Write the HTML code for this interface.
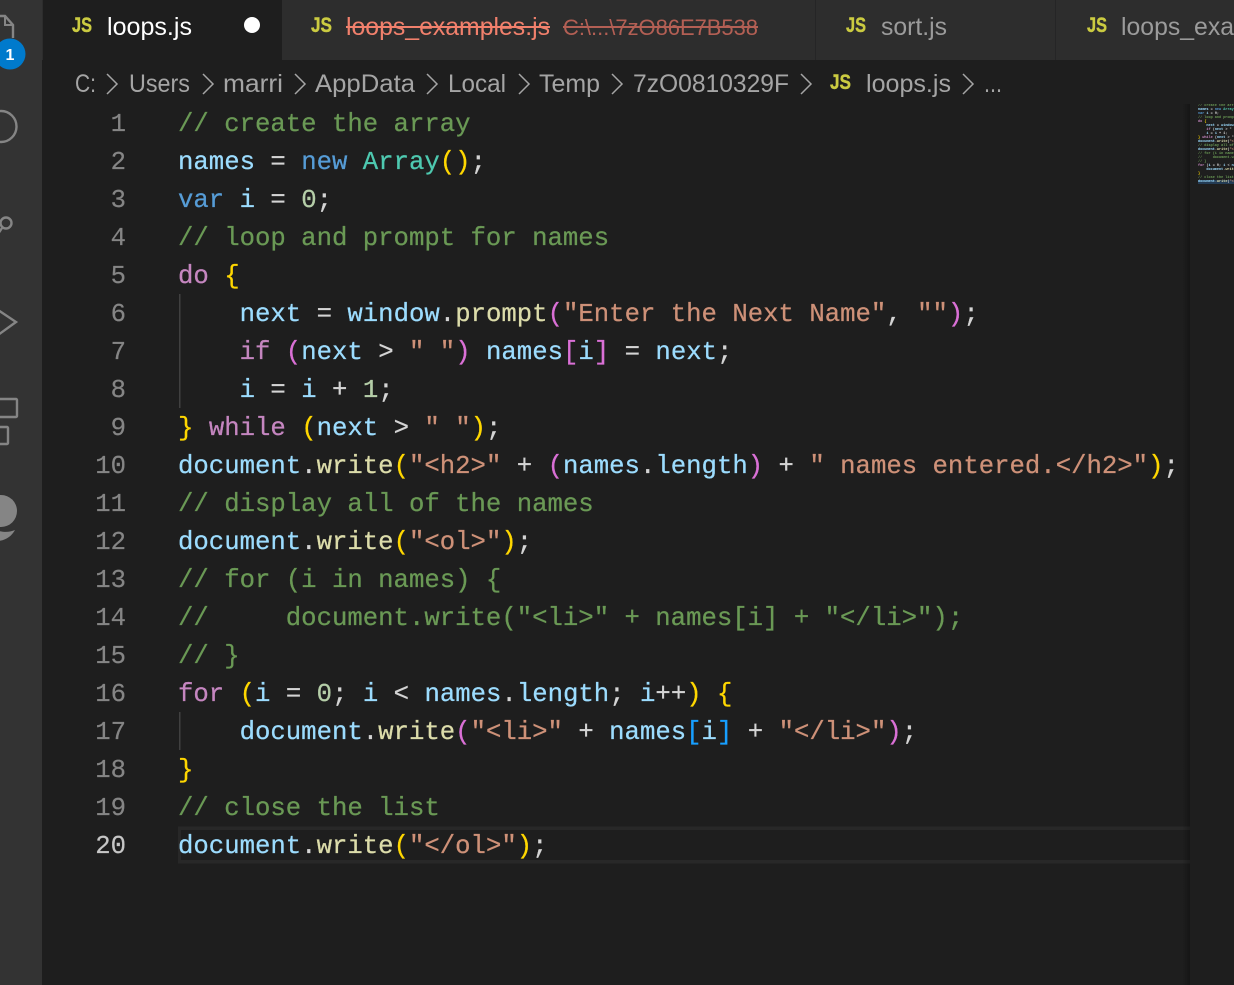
<!DOCTYPE html>
<html lang="en">
<head>
<meta charset="utf-8">
<title>loops.js</title>
<style>
html,body{margin:0;padding:0;background:#1e1e1e;}
#app{position:relative;width:1234px;height:985px;overflow:hidden;background:#1e1e1e;}
svg.chrome{position:absolute;left:0;top:0;}
.ln{position:absolute;left:60px;width:66px;height:38px;margin-top:2px;text-align:right;color:#858585;font:25.67px/38px "Liberation Mono",monospace;-webkit-text-stroke:.2px currentColor;}
.ln.a{color:#c6c6c6;}
.cl{position:absolute;left:178px;height:38px;margin-top:2px;white-space:pre;font:25.67px/38px "Liberation Mono",monospace;color:#d4d4d4;-webkit-text-stroke:.25px;}
.c{color:#6a9955}.v{color:#9cdcfe}.f{color:#dcdcaa}.s{color:#ce9178}.k{color:#c586c0}.b{color:#569cd6}.t{color:#4ec9b0}.n{color:#b5cea8}.y{color:#ffd700}.p{color:#da70d6}.l{color:#179fff}
#mm{position:absolute;left:1198px;top:104px;width:36px;height:84px;overflow:hidden;font:bold 3.5px/4px "Liberation Mono",monospace;white-space:pre;color:#d4d4d4;}
#mm div{height:4px;}
</style>
</head>
<body>
<div id="app">
<svg class="chrome" width="1234" height="985" viewBox="0 0 1234 985" font-family="'Liberation Sans',sans-serif">
  <defs>
    <linearGradient id="sh" x1="0" x2="1" y1="0" y2="0">
      <stop offset="0" stop-color="#000" stop-opacity="0"/>
      <stop offset="1" stop-color="#000" stop-opacity=".28"/>
    </linearGradient>
  </defs>
  <!-- activity bar -->
  <rect x="0" y="0" width="42" height="985" fill="#333333"/>
  <!-- tab bar -->
  <rect x="42" y="0" width="1192" height="60" fill="#2d2d2d"/>
  <rect x="43" y="0" width="239" height="60" fill="#1e1e1e"/>
  <rect x="815" y="0" width="1" height="60" fill="#252526"/>
  <rect x="1055" y="0" width="1" height="60" fill="#252526"/>

  <!-- activity icons -->
  <g fill="none" stroke="#858585" stroke-width="2.4">
    <path d="M-2 16H5L13 25V38"/>
    <path d="M5 16V25H13" stroke-width="2"/>
    <circle cx="1" cy="126.5" r="15.5"/>
    <circle cx="6" cy="223" r="5.5"/>
    <path d="M2 228L-2 234"/>
    <path d="M-2 310L16 322L-2 335"/>
    <rect x="-8" y="399" width="25" height="18" rx="1"/>
    <rect x="-8" y="427" width="16" height="17" rx="1"/>
  </g>
  <circle cx="1" cy="511" r="16" fill="#858585"/>
  <path d="M-4 530C4 533 10 532 15 530C11 537 5 541 -4 541Z" fill="#858585"/>
  <circle cx="10" cy="54" r="15.5" fill="#007acc"/>
  <text x="10" y="60" fill="#fff" font-size="16" font-weight="700" text-anchor="middle">1</text>

  <!-- tab JS icons -->
  <g fill="#cbcb41" font-size="21" font-weight="700" stroke="#cbcb41" stroke-width=".4">
    <text x="72" y="32" textLength="20" lengthAdjust="spacingAndGlyphs">JS</text>
    <text x="311" y="32" textLength="21" lengthAdjust="spacingAndGlyphs">JS</text>
    <text x="846" y="32" textLength="20" lengthAdjust="spacingAndGlyphs">JS</text>
    <text x="1087" y="32" textLength="20" lengthAdjust="spacingAndGlyphs">JS</text>
    <text x="830" y="89" textLength="21" lengthAdjust="spacingAndGlyphs">JS</text>
  </g>

  <!-- tab labels -->
  <g font-size="25">
    <text x="107" y="35" fill="#ffffff" textLength="85" lengthAdjust="spacingAndGlyphs">loops.js</text>
    <text x="346" y="35" fill="#f1806c" textLength="204" lengthAdjust="spacingAndGlyphs">loops_examples.js</text>
    <rect x="346" y="26" width="204" height="2" fill="#f1806c"/>
    <text x="563" y="35" fill="#b35f54" font-size="22" textLength="195" lengthAdjust="spacingAndGlyphs">C:\...\7zO86E7B538</text>
    <rect x="563" y="26" width="195" height="2" fill="#b35f54"/>
    <text x="881" y="35" fill="#9b9b9b" textLength="66" lengthAdjust="spacingAndGlyphs">sort.js</text>
    <text x="1121" y="35" fill="#9b9b9b" textLength="113" lengthAdjust="spacingAndGlyphs">loops_exa</text>
  </g>
  <circle cx="252" cy="25" r="8" fill="#ffffff"/>

  <!-- breadcrumbs -->
  <g font-size="25" fill="#a5a5a5">
    <text x="75" y="92" textLength="21" lengthAdjust="spacingAndGlyphs">C:</text>
    <text x="129" y="92" textLength="61" lengthAdjust="spacingAndGlyphs">Users</text>
    <text x="223" y="92" textLength="60" lengthAdjust="spacingAndGlyphs">marri</text>
    <text x="315" y="92" textLength="100" lengthAdjust="spacingAndGlyphs">AppData</text>
    <text x="448" y="92" textLength="58" lengthAdjust="spacingAndGlyphs">Local</text>
    <text x="539" y="92" textLength="61" lengthAdjust="spacingAndGlyphs">Temp</text>
    <text x="633" y="92" textLength="156" lengthAdjust="spacingAndGlyphs">7zO0810329F</text>
    <text x="866" y="92" textLength="85" lengthAdjust="spacingAndGlyphs">loops.js</text>
    <text x="984" y="92" textLength="18" lengthAdjust="spacingAndGlyphs">...</text>
  </g>
  <g fill="none" stroke="#a5a5a5" stroke-width="1.5">
    <path d="M107 74L117 84L107 94"/>
    <path d="M203 74L213 84L203 94"/>
    <path d="M295 74L305 84L295 94"/>
    <path d="M427 74L437 84L427 94"/>
    <path d="M519 74L529 84L519 94"/>
    <path d="M612 74L622 84L612 94"/>
    <path d="M801 74L811 84L801 94"/>
    <path d="M963 74L973 84L963 94"/>
  </g>

  <!-- current line highlight -->
  <rect x="178" y="826.5" width="1012" height="3.5" fill="#282828"/>
  <rect x="178" y="860" width="1012" height="3.5" fill="#282828"/>
  <rect x="178" y="826.5" width="3" height="37" fill="#282828"/>

  <!-- indent guides -->
  <rect x="179" y="294" width="1.5" height="114" fill="#404040"/>
  <rect x="179" y="712" width="1.5" height="38" fill="#404040"/>

  <!-- minimap shadow -->
  <rect x="1182" y="104" width="8" height="881" fill="url(#sh)"/>
  <!-- minimap current-line highlight -->
  <rect x="1198" y="180" width="36" height="4" fill="#264f78" opacity=".6"/>
</svg>

<div class="ln" style="top:104px">1</div>
<div class="ln" style="top:142px">2</div>
<div class="ln" style="top:180px">3</div>
<div class="ln" style="top:218px">4</div>
<div class="ln" style="top:256px">5</div>
<div class="ln" style="top:294px">6</div>
<div class="ln" style="top:332px">7</div>
<div class="ln" style="top:370px">8</div>
<div class="ln" style="top:408px">9</div>
<div class="ln" style="top:446px">10</div>
<div class="ln" style="top:484px">11</div>
<div class="ln" style="top:522px">12</div>
<div class="ln" style="top:560px">13</div>
<div class="ln" style="top:598px">14</div>
<div class="ln" style="top:636px">15</div>
<div class="ln" style="top:674px">16</div>
<div class="ln" style="top:712px">17</div>
<div class="ln" style="top:750px">18</div>
<div class="ln" style="top:788px">19</div>
<div class="ln a" style="top:826px">20</div>

<div class="cl" style="top:104px"><span class="c">// create the array</span></div>
<div class="cl" style="top:142px"><span class="v">names</span> = <span class="b">new</span> <span class="t">Array</span><span class="y">()</span>;</div>
<div class="cl" style="top:180px"><span class="b">var</span> <span class="v">i</span> = <span class="n">0</span>;</div>
<div class="cl" style="top:218px"><span class="c">// loop and prompt for names</span></div>
<div class="cl" style="top:256px"><span class="k">do</span> <span class="y">{</span></div>
<div class="cl" style="top:294px">    <span class="v">next</span> = <span class="v">window</span>.<span class="f">prompt</span><span class="p">(</span><span class="s">"Enter the Next Name"</span>, <span class="s">""</span><span class="p">)</span>;</div>
<div class="cl" style="top:332px">    <span class="k">if</span> <span class="p">(</span><span class="v">next</span> &gt; <span class="s">" "</span><span class="p">)</span> <span class="v">names</span><span class="p">[</span><span class="v">i</span><span class="p">]</span> = <span class="v">next</span>;</div>
<div class="cl" style="top:370px">    <span class="v">i</span> = <span class="v">i</span> + <span class="n">1</span>;</div>
<div class="cl" style="top:408px"><span class="y">}</span> <span class="k">while</span> <span class="y">(</span><span class="v">next</span> &gt; <span class="s">" "</span><span class="y">)</span>;</div>
<div class="cl" style="top:446px"><span class="v">document</span>.<span class="f">write</span><span class="y">(</span><span class="s">"&lt;h2&gt;"</span> + <span class="p">(</span><span class="v">names</span>.<span class="v">length</span><span class="p">)</span> + <span class="s">" names entered.&lt;/h2&gt;"</span><span class="y">)</span>;</div>
<div class="cl" style="top:484px"><span class="c">// display all of the names</span></div>
<div class="cl" style="top:522px"><span class="v">document</span>.<span class="f">write</span><span class="y">(</span><span class="s">"&lt;ol&gt;"</span><span class="y">)</span>;</div>
<div class="cl" style="top:560px"><span class="c">// for (i in names) {</span></div>
<div class="cl" style="top:598px"><span class="c">//     document.write("&lt;li&gt;" + names[i] + "&lt;/li&gt;");</span></div>
<div class="cl" style="top:636px"><span class="c">// }</span></div>
<div class="cl" style="top:674px"><span class="k">for</span> <span class="y">(</span><span class="v">i</span> = <span class="n">0</span>; <span class="v">i</span> &lt; <span class="v">names</span>.<span class="v">length</span>; <span class="v">i</span>++<span class="y">)</span> <span class="y">{</span></div>
<div class="cl" style="top:712px">    <span class="v">document</span>.<span class="f">write</span><span class="p">(</span><span class="s">"&lt;li&gt;"</span> + <span class="v">names</span><span class="l">[</span><span class="v">i</span><span class="l">]</span> + <span class="s">"&lt;/li&gt;"</span><span class="p">)</span>;</div>
<div class="cl" style="top:750px"><span class="y">}</span></div>
<div class="cl" style="top:788px"><span class="c">// close the list</span></div>
<div class="cl" style="top:826px"><span class="v">document</span>.<span class="f">write</span><span class="y">(</span><span class="s">"&lt;/ol&gt;"</span><span class="y">)</span>;</div>

<div id="mm"><div class="c">// create the array</div><div><span class="v">names</span> = <span class="b">new</span> <span class="t">Array</span>();</div><div><span class="b">var</span> <span class="v">i</span> = 0;</div><div class="c">// loop and prompt</div><div><span class="k">do</span> <span class="y">{</span></div><div>    <span class="v">next</span> = <span class="v">window</span>.<span class="f">pro</span></div><div>    <span class="k">if</span> (<span class="v">next</span> &gt; " "</div><div>    <span class="v">i</span> = <span class="v">i</span> + 1;</div><div><span class="y">}</span> <span class="k">while</span> (<span class="v">next</span> &gt; "</div><div><span class="v">document</span>.<span class="f">write</span>(<span class="s">"&lt;h2</span></div><div class="c">// display all of</div><div><span class="v">document</span>.<span class="f">write</span>(<span class="s">"&lt;ol</span></div><div class="c">// for (i in names</div><div class="c">//     document.write</div><div class="c">// }</div><div><span class="k">for</span> (<span class="v">i</span> = 0; <span class="v">i</span> &lt; <span class="v">nam</span></div><div>    <span class="v">document</span>.<span class="f">write</span></div><div><span class="y">}</span></div><div class="c">// close the list</div><div><span class="v">document</span>.<span class="f">write</span>(<span class="s">"&lt;/o</span></div></div>
</div>
</body>
</html>
